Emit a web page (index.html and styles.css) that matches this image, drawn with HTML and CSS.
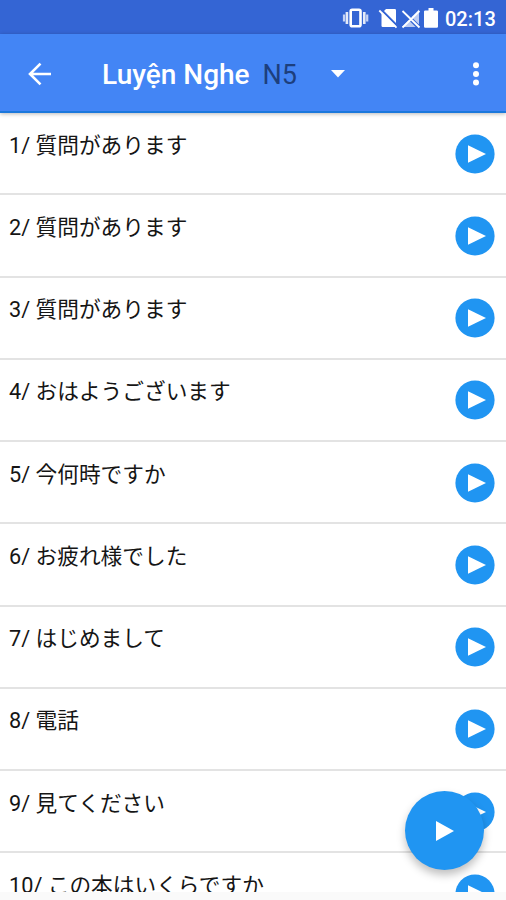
FILE: index.html
```html
<!DOCTYPE html>
<html lang="vi">
<head>
<meta charset="utf-8">
<title>Luyện Nghe</title>
<link rel="stylesheet" href="styles.css">
</head>
<body>
<svg width="0" height="0" class="defs">
  <symbol id="play" viewBox="0 0 40 40"><circle cx="20" cy="20" r="19.6" fill="#2095f2"/><path d="M13 11.2v17.6L31 20z" fill="#fff"/></symbol>
</svg>
<div class="screen">
  <div class="status">
    <svg class="status-icons" viewBox="0 0 98 24" width="98" height="24">
      <rect x="8.7" y="4.8" width="9.8" height="16.4" rx="1.5" fill="none" stroke="#fff" stroke-width="2.6"/>
      <path d="M4.9 7v12M22.3 7v12" stroke="#e4eaf9" stroke-width="2.6"/>
      <path d="M2 9.5v7M25.2 9.5v7" stroke="#c6d3f4" stroke-width="2.2"/>
      <path d="M44 4h8.8q1.2 0 1.2 1.2v15.6q0 1.2-1.2 1.2H40.7q-1.2 0-1.2-1.2V8.5z" fill="#fff"/>
      <path d="M38.5 4L56 21.5" stroke="#3465d4" stroke-width="2.2"/>
      <path d="M37.3 5.5L54.5 22.7" stroke="#fff" stroke-width="1.8"/>
      <path d="M60 22L77 4.5V22z" fill="#bccbf2"/>
      <path d="M59.5 5L77.5 23" stroke="#3465d4" stroke-width="4"/>
      <path d="M60.5 6L77.5 22.5M60.5 22.5L77.5 6" stroke="#fff" stroke-width="1.8"/>
      <path d="M86.5 3h5v2.4h3.3q1.2 0 1.2 1.2v14.9q0 1.3-1.3 1.3H83.3q-1.3 0-1.3-1.3V6.6q0-1.2 1.2-1.2h3.3z" fill="#fff"/>
    </svg>
    <span class="time">02:13</span>
  </div>
  <header class="bar">
    <svg class="back" viewBox="0 0 24 24" width="24" height="24"><path d="M23 12H2.5M12.5 1.6L2 12l10.5 10.4" fill="none" stroke="#fff" stroke-width="2.6"/></svg>
    <h1>Luyện Nghe</h1>
    <span class="level">N5</span>
    <svg class="caret" viewBox="0 0 14 8" width="14" height="8"><path d="M0 0h14L7 7.5z" fill="#fff"/></svg>
    <svg class="more" viewBox="0 0 8 24" width="8" height="24" fill="#fff"><circle cx="4" cy="3.3" r="3"/><circle cx="4" cy="12" r="3"/><circle cx="4" cy="20.5" r="3"/></svg>
  </header>
  <main class="list">
    <div class="row"><span lang="ja">1/ 質問があります</span><svg><use href="#play"/></svg></div>
    <div class="row"><span lang="ja">2/ 質問があります</span><svg><use href="#play"/></svg></div>
    <div class="row"><span lang="ja">3/ 質問があります</span><svg><use href="#play"/></svg></div>
    <div class="row"><span lang="ja">4/ おはようございます</span><svg><use href="#play"/></svg></div>
    <div class="row"><span lang="ja">5/ 今何時ですか</span><svg><use href="#play"/></svg></div>
    <div class="row"><span lang="ja">6/ お疲れ様でした</span><svg><use href="#play"/></svg></div>
    <div class="row"><span lang="ja">7/ はじめまして</span><svg><use href="#play"/></svg></div>
    <div class="row"><span lang="ja">8/ 電話</span><svg><use href="#play"/></svg></div>
    <div class="row"><span lang="ja">9/ 見てください</span><svg><use href="#play"/></svg></div>
    <div class="row"><span lang="ja">10/ この本はいくらですか</span><svg><use href="#play"/></svg></div>
  </main>
  <div class="footer"></div>
  <div class="fab"><svg viewBox="0 0 18 20" width="18" height="20"><path d="M0 0v20L18 10z" fill="#fff"/></svg></div>
</div>
</body>
</html>
```
FILE: styles.css
```css
* { box-sizing: border-box; }
body { margin: 0; font-family: Roboto, "Noto Sans CJK JP", sans-serif; background: #fff; }
svg { display: block; flex: none; }
.defs { position: absolute; }
.screen { position: relative; height: 900px; overflow: hidden; display: flex; flex-direction: column; }
.status {
  height: 34px; flex: none; background: #3465d4; color: #fff;
  display: flex; justify-content: flex-end; align-items: center;
  padding: 3px 10px 0 0;
}
.status-icons { margin: 0 5px 3px 0; }
.time { font-size: 20px; font-weight: 500; line-height: 24px; width: 51px; white-space: nowrap; }
.bar {
  position: relative; z-index: 1; height: 79px; flex: none; background: #4385f5; color: #fff;
  display: flex; align-items: center; padding: 2px 26px 0 28px;
  border-bottom: 2px solid #1b78dc; box-shadow: 0 1px 4px rgba(0,0,0,.28);
}
.bar h1 { margin: 2px 0 0 50px; font-size: 28px; font-weight: 500; line-height: 36px; width: 148px; white-space: nowrap; }
.level { margin: 2px 0 0 12.5px; width: 35px; font-size: 27px; line-height: 36px; color: #1d3f7d; }
.caret { margin-left: 33px; }
.more { margin-left: auto; }
.list { height: 778.5px; flex: none; overflow: hidden; }
.row {
  height: 82.25px; border-bottom: 2px solid #e3e3e3; padding: 20.5px 11px 0 9px;
  display: flex; justify-content: space-between; align-items: flex-start;
}
.row span { font-size: 21.7px; line-height: 26px; margin-top: -1px; color: #151515; white-space: nowrap; }
.row svg { width: 40px; height: 40px; }
.footer { flex: 1; background: #fafafa; }
.fab {
  position: absolute; left: 405px; top: 791px; width: 79px; height: 79px; border-radius: 50%;
  background: #2095f2; box-shadow: 0 5px 9px rgba(0,0,0,.25);
  display: flex; align-items: center; justify-content: center;
}
```
